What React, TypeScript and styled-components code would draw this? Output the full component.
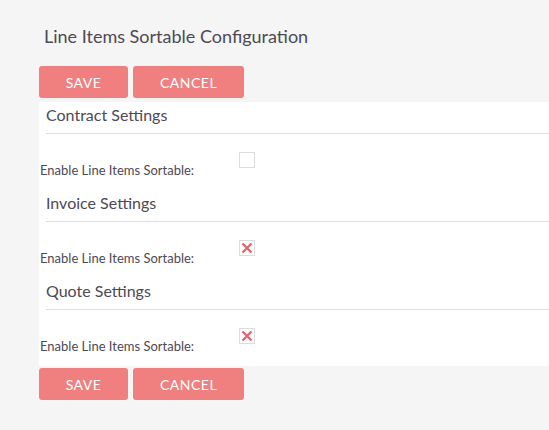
import styled, { createGlobalStyle } from 'styled-components';

const GlobalStyle = createGlobalStyle`
    html, body {
        margin: 0;
        padding: 0;
        background: #f5f5f5;
        font-family: Lato, "Open Sans", sans-serif;
        color: #4d4955;
    }
`;

const Page = styled.div`
    width: 549px;
    height: 430px;
    overflow: hidden;
    padding: 24px 0 0 39px;
    box-sizing: border-box;
`;

const Title = styled.h2`
    margin: 0 0 18px 5px;
    font-size: 18px;
    font-weight: 400;
    line-height: 24px;
`;

const ButtonBar = styled.div`
    display: flex;
    gap: 5px;
`;

const Button = styled.button<{ $width: number }>`
    width: ${p => p.$width}px;
    height: 32px;
    border: none;
    border-radius: 3px;
    background: #f08080;
    color: #fff;
    font-family: Lato, sans-serif;
    font-size: 14px;
    letter-spacing: 0.5px;
    text-transform: uppercase;
    padding: 0;
    cursor: pointer;
`;

const Panel = styled.div`
    background: #fff;
    margin: 4px 0 2px;
`;

const SectionHeader = styled.div`
    margin-left: 7px;
    height: 32px;
    line-height: 26px;
    font-size: 16px;
    border-bottom: 1px solid #dddddd;
    box-sizing: border-box;
`;

const Row = styled.div`
    display: flex;
    height: 56px;
    margin-left: 1px;
`;

const Label = styled.div`
    width: 199px;
    font-size: 13px;
    padding-top: 28px;
`;

const Box = styled.div`
    margin-top: 18px;
    width: 16px;
    height: 16px;
    box-sizing: border-box;
    border: 1px solid #dcdcdc;
    background: #fff;
    display: flex;
    align-items: center;
    justify-content: center;
`;

function Checkbox({ checked }: { checked: boolean }) {
    return (
        <Box>
            {checked && (
                <svg width="12" height="12" viewBox="0 0 12 12">
                    <path d="M1.5 1.5 L10.5 10.5 M10.5 1.5 L1.5 10.5" stroke="#e4676f" strokeWidth="2.4" />
                </svg>
            )}
        </Box>
    );
}

const sections = [
    { name: 'Contract Settings', enabled: false },
    { name: 'Invoice Settings', enabled: true },
    { name: 'Quote Settings', enabled: true },
];

export default function App() {
    return (
        <Page>
            <GlobalStyle />
            <Title>Line Items Sortable Configuration</Title>
            <ButtonBar>
                <Button $width={89}>Save</Button>
                <Button $width={111}>Cancel</Button>
            </ButtonBar>
            <Panel>
                {sections.map(s => (
                    <div key={s.name}>
                        <SectionHeader>{s.name}</SectionHeader>
                        <Row>
                            <Label>Enable Line Items Sortable:</Label>
                            <Checkbox checked={s.enabled} />
                        </Row>
                    </div>
                ))}
            </Panel>
            <ButtonBar>
                <Button $width={89}>Save</Button>
                <Button $width={111}>Cancel</Button>
            </ButtonBar>
        </Page>
    );
}
